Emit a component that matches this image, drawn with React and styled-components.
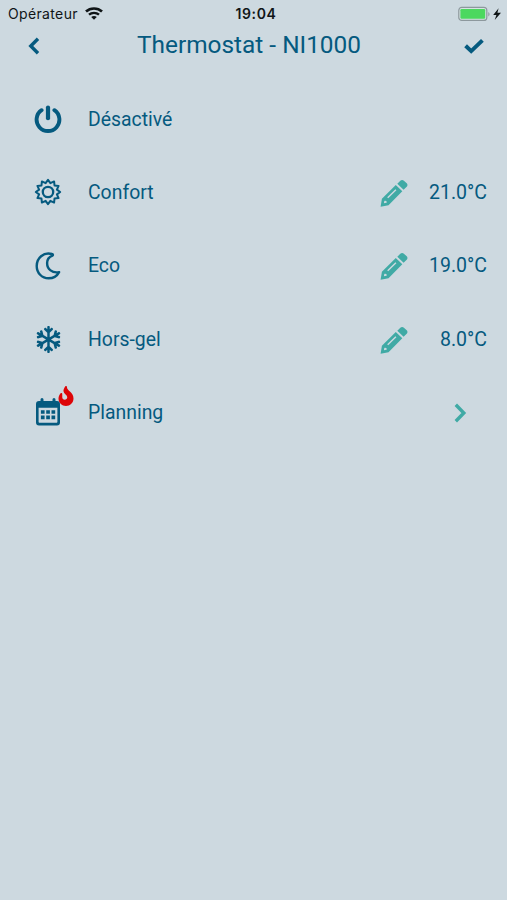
import styled, { createGlobalStyle } from "styled-components";
import { FaFire, FaRegSnowflake } from "react-icons/fa";

const modes = [
  { name: "Désactivé", icon: <PowerIcon /> },
  { name: "Confort", icon: <SunIcon />, temperature: "21.0°C" },
  { name: "Eco", icon: <MoonIcon />, temperature: "19.0°C" },
  { name: "Hors-gel", icon: <FaRegSnowflake size={27} />, temperature: "8.0°C" },
  { name: "Planning", icon: <CalendarIcon />, heating: true },
];

export default function App() {
  return (
    <Screen>
      <GlobalStyle />
      <StatusBar>
        <Carrier>
          Opérateur
          <WifiIcon />
        </Carrier>
        <Clock>19:04</Clock>
        <Power>
          <BatteryIcon />
        </Power>
      </StatusBar>
      <Header>
        <BackIcon />
        <Title>Thermostat - NI1000</Title>
        <CheckIcon />
      </Header>
      <Modes>
        {modes.map((m) => (
          <Mode key={m.name} {...m} />
        ))}
      </Modes>
    </Screen>
  );
}

function Mode({ name, icon, temperature, heating }) {
  return (
    <Row>
      <IconBox>
        {icon}
        {heating && (
          <Flame>
            <FaFire size={20} />
          </Flame>
        )}
      </IconBox>
      <Label>{name}</Label>
      {temperature && (
        <>
          <EditButton>
            <PencilIcon />
          </EditButton>
          <Temperature>{temperature}</Temperature>
        </>
      )}
      {heating && (
        <NextButton>
          <NextIcon />
        </NextButton>
      )}
    </Row>
  );
}

function WifiIcon() {
  return (
    <svg width="18" height="13" viewBox="0 0 18 13" fill="none">
      <path d="M1 4.5C5.4.5 12.6.5 17 4.5" stroke="#101517" strokeWidth="2.7" />
      <path d="M4 7.7c2.8-2.5 7.2-2.5 10 0" stroke="#101517" strokeWidth="2.4" />
      <path d="M6.2 10c1.6-1.5 4-1.5 5.6 0L9 12.8z" fill="#101517" />
    </svg>
  );
}

function BatteryIcon() {
  return (
    <svg width="44" height="16" viewBox="0 0 44 16">
      <rect x="0.8" y="1.4" width="28" height="13" rx="3" fill="#d5e4e2" stroke="#8d989d" strokeWidth="1.2" />
      <rect x="2.4" y="3" width="24.8" height="9.8" rx="1.2" fill="#4cd85f" />
      <path d="M30.3 6v4.4c1.7-.7 1.7-3.7 0-4.4z" fill="#8d989d" />
      <path d="M40.6 2.2 35.2 8.9h3.2l-1.7 5L43 6.8h-3.6z" fill="#101517" />
    </svg>
  );
}

function BackIcon() {
  return (
    <svg width="12" height="18" viewBox="0 0 12 18" fill="none" stroke="currentColor" strokeWidth="3.4">
      <path d="M10 1.8 2.8 9l7.2 7.2" />
    </svg>
  );
}

function NextIcon() {
  return (
    <svg width="13" height="20" viewBox="0 0 13 20" fill="none" stroke="currentColor" strokeWidth="3.4">
      <path d="m1.8 1.8 8 8.2-8 8.2" />
    </svg>
  );
}

function CheckIcon() {
  return (
    <svg width="20" height="16" viewBox="0 0 20 16" fill="none" stroke="currentColor" strokeWidth="4">
      <path d="m1.6 7.8 5.6 5.3L18.4 2.4" />
    </svg>
  );
}

function PowerIcon() {
  return (
    <svg width="28" height="28" viewBox="0 0 28 28" fill="none" stroke="currentColor" strokeLinecap="round">
      <path d="M7.6 5.2a11.4 11.4 0 1 0 12.8 0" strokeWidth="3.9" />
      <path d="M14 2.6v10.6" strokeWidth="4.2" />
    </svg>
  );
}

// 12 rays around the disc
function SunIcon() {
  const point = (r, deg) => {
    const a = (deg * Math.PI) / 180;
    return `${(14 + r * Math.sin(a)).toFixed(2)} ${(14 - r * Math.cos(a)).toFixed(2)}`;
  };
  let d = `M${point(12.2, 0)}`;
  for (let i = 0; i < 12; i++) {
    d += `L${point(9.2, i * 30 + 15)}L${point(12.2, i * 30 + 30)}`;
  }
  return (
    <svg width="28" height="28" viewBox="0 0 28 28" fill="none" stroke="currentColor" strokeLinejoin="round">
      <path d={`${d}Z`} strokeWidth="2" />
      <circle cx="14" cy="14" r="5.2" strokeWidth="2.3" />
    </svg>
  );
}

function MoonIcon() {
  return (
    <svg width="26" height="28" viewBox="0 0 26 28" fill="none" stroke="currentColor" strokeWidth="2.4" strokeLinejoin="round">
      <path d="M17 2C8.3-.3 1.7 6.2 1.7 14c0 7 5.2 12.3 11.9 12.3 4.6 0 8.5-2.4 10.5-6.2-6.8 1.4-12-2.8-12-9.2 0-3.2 1.4-5.7 5.3-7.3.8-.4.6-1.4-.4-1.6z" />
    </svg>
  );
}

function CalendarIcon() {
  return (
    <svg width="26" height="30" viewBox="0 0 26 30">
      <path
        d="M4 4h18a3 3 0 0 1 3 3v18.5a3 3 0 0 1-3 3H4a3 3 0 0 1-3-3V7a3 3 0 0 1 3-3zm-.4 6.8v14c0 .6.4 1 1 1h16.8c.6 0 1-.4 1-1v-14z"
        fill="currentColor"
        fillRule="evenodd"
      />
      <path d="M7 2.5V7M19 2.5V7" stroke="currentColor" strokeWidth="3" strokeLinecap="round" />
      <path d="M5.9 15h14.3M5.9 20.4h14.3" stroke="currentColor" strokeWidth="3.6" strokeDasharray="3.7 1.6" />
    </svg>
  );
}

function PencilIcon() {
  return (
    <svg width="28" height="28" viewBox="0 0 28 28" fill="currentColor">
      <path d="m17.3 4.7 3-3c1-1 2.6-1 3.6 0l2.8 2.6c1 1 1 2.5 0 3.5l-3.1 3z" />
      <path
        d="m15.8 6.1 6.5 6.2L8.5 26.2.6 27.8l1.3-8zM4.3 21.9l-.4 2.4 2.6-.5c.8-.6-.2-2.8-2.2-1.9zM7.2 18.3l1 1 8.2-8-1-1z"
        fillRule="evenodd"
      />
    </svg>
  );
}

const GlobalStyle = createGlobalStyle`
  body {
    margin: 0;
    background: #cdd9e0;
  }
`;

const Screen = styled.div`
  box-sizing: border-box;
  height: 900px;
  background: #cdd9e0;
  color: #055a7f;
  font-family: Roboto, sans-serif;
`;

const StatusBar = styled.div`
  display: grid;
  grid-template-columns: 1fr auto 1fr;
  align-items: center;
  height: 27px;
  padding: 0 5px 0 8px;
  color: #101517;
  font-family: Inter, sans-serif;
  font-size: 14px;
`;

const Carrier = styled.div`
  display: flex;
  align-items: center;
  gap: 7px;
  letter-spacing: 0.35px;
`;

const Clock = styled.div`
  padding-left: 2px;
  font-weight: 600;
  letter-spacing: 0.65px;
`;

const Power = styled.div`
  display: flex;
  justify-content: flex-end;
`;

const Header = styled.header`
  display: flex;
  align-items: center;
  height: 37px;
  padding: 0 23px 0 28px;
`;

const Title = styled.h1`
  flex: 1;
  margin: 0;
  padding: 0 6px 1px 0;
  font-size: 24.4px;
  font-weight: 400;
  line-height: 30px;
  text-align: center;
`;

const Modes = styled.div`
  padding-top: 18.5px;
`;

const Row = styled.div`
  display: flex;
  align-items: center;
  height: 73.3px;
  padding: 0 20px 0 32px;
`;

const IconBox = styled.div`
  position: relative;
  display: flex;
  align-items: center;
  justify-content: center;
  width: 32px;
  height: 32px;
`;

const Flame = styled.div`
  position: absolute;
  top: -10px;
  left: 24px;
  display: flex;
  color: #dd0508;
`;

const Label = styled.div`
  flex: 1;
  margin-left: 24px;
  padding-top: 1.5px;
  font-size: 19.4px;
  line-height: 24px;
`;

const EditButton = styled.div`
  display: flex;
  padding-top: 1px;
  color: #40aaa5;
`;

const Temperature = styled.div`
  width: 79px;
  padding-top: 1.5px;
  font-size: 19.5px;
  line-height: 24px;
  text-align: right;
`;

const NextButton = styled.div`
  display: flex;
  padding: 2px 20px 0 0;
  color: #40aaa5;
`;
